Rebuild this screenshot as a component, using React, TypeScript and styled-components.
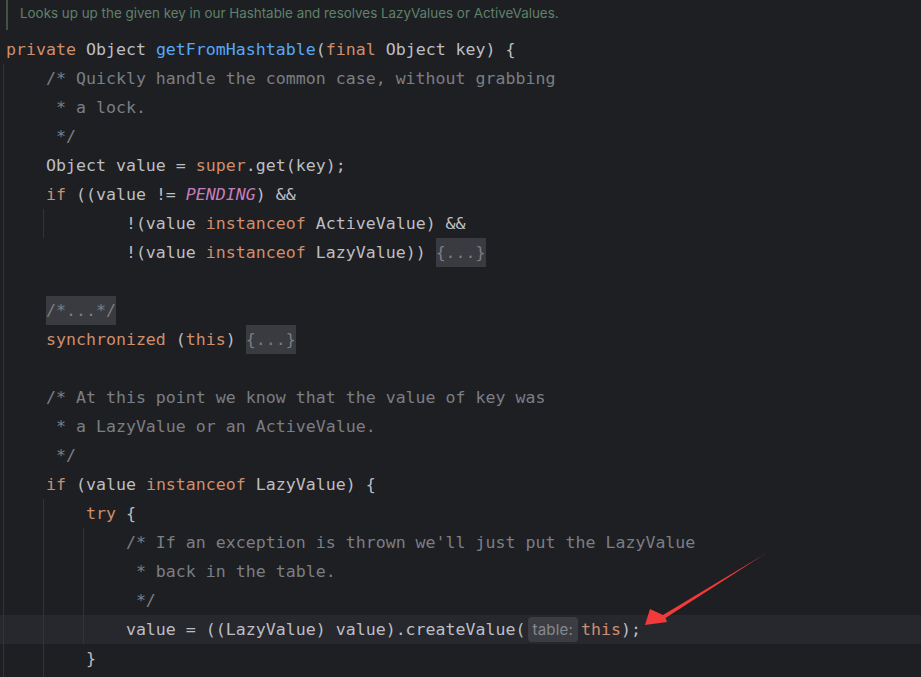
import React from 'react';
import styled, { createGlobalStyle, css } from 'styled-components';

const colors = {
  bg: '#1e1f22',
  text: '#bcbec4',
  keyword: '#cf8e6d',
  method: '#56a8f5',
  comment: '#7a7e85',
  constant: '#c77dbb',
  doc: '#5f826b',
  guide: '#313337',
  caretRow: '#26282e',
  fold: '#393b40',
  hint: '#3b3d42',
  hintText: '#868a91',
};

const rowHeight = 29;

const GlobalStyle = createGlobalStyle`
  html, body {
    margin: 0;
    padding: 0;
    background: ${colors.bg};
    overflow: hidden;
  }
`;

const Editor = styled.div`
  position: relative;
  width: 921px;
  height: 677px;
  background: ${colors.bg};
  overflow: hidden;
`;

const DocBlock = styled.div`
  display: flex;
  align-items: flex-start;
  height: 35px;
`;

const DocBar = styled.div`
  width: 2px;
  height: 30px;
  margin-left: 6px;
  background: #3e5546;
`;

const DocText = styled.div`
  margin-left: 12px;
  padding-top: 5px;
  font-family: Inter, "Noto Sans", sans-serif;
  font-size: 13.4px;
  line-height: 16px;
  color: ${colors.doc};
`;

const Code = styled.div`
  display: flex;
  flex-direction: column;
`;

const Line = styled.div<{ $current?: boolean }>`
  position: relative;
  height: ${rowHeight}px;
  line-height: ${rowHeight}px;
  padding-left: 6px;
  white-space: pre;
  font-family: "DejaVu Sans Mono", "Liberation Mono", monospace;
  font-size: 16.6px;
  color: ${colors.text};
  ${({ $current }) => $current && css`background: ${colors.caretRow};`}
`;

const Guide = styled.span<{ $x: number }>`
  position: absolute;
  top: 0;
  bottom: 0;
  left: ${({ $x }) => $x}px;
  width: 1px;
  background: ${colors.guide};
`;

type Kind = 'plain' | 'kw' | 'method' | 'comment' | 'const' | 'fold' | 'hint';

const Tok = styled.span<{ $kind: Kind }>`
  ${({ $kind }) => $kind === 'kw' && css`color: ${colors.keyword};`}
  ${({ $kind }) => $kind === 'method' && css`color: ${colors.method};`}
  ${({ $kind }) => $kind === 'comment' && css`color: ${colors.comment};`}
  ${({ $kind }) => $kind === 'const' && css`
    color: ${colors.constant};
    font-style: italic;
  `}
  ${({ $kind }) => $kind === 'fold' && css`
    display: inline-block;
    height: ${rowHeight}px;
    vertical-align: top;
    color: ${colors.comment};
    background: ${colors.fold};
  `}
`;

const Hint = styled.span`
  display: inline-block;
  height: 25px;
  line-height: 25px;
  margin: 2px 3px 0 2px;
  padding: 0 5px;
  vertical-align: top;
  border-radius: 4px;
  background: ${colors.hint};
  color: ${colors.hintText};
  font-family: Inter, "Noto Sans", sans-serif;
  font-size: 15px;
  letter-spacing: 0.2px;
`;

const Arrow = styled.svg`
  position: absolute;
  left: 0;
  top: 0;
  pointer-events: none;
`;

type Token = [Kind, string];
interface Row {
  tokens: Token[];
  guides?: number[];
  current?: boolean;
}

const sp = (n: number): Token => ['plain', ' '.repeat(n)];

const rows: Row[] = [
  {
    tokens: [
      ['kw', 'private '], ['plain', 'Object '], ['method', 'getFromHashtable'],
      ['plain', '('], ['kw', 'final '], ['plain', 'Object key) {'],
    ],
  },
  { tokens: [sp(4), ['comment', '/* Quickly handle the common case, without grabbing']], guides: [3] },
  { tokens: [sp(4), ['comment', ' * a lock.']], guides: [3] },
  { tokens: [sp(4), ['comment', ' */']], guides: [3] },
  { tokens: [sp(4), ['plain', 'Object value = '], ['kw', 'super'], ['plain', '.get(key);']], guides: [3] },
  {
    tokens: [sp(4), ['kw', 'if '], ['plain', '((value != '], ['const', 'PENDING'], ['plain', ') &&']],
    guides: [3],
  },
  {
    tokens: [sp(12), ['plain', '!(value '], ['kw', 'instanceof '], ['plain', 'ActiveValue) &&']],
    guides: [3, 43],
  },
  {
    tokens: [sp(12), ['plain', '!(value '], ['kw', 'instanceof '], ['plain', 'LazyValue)) '], ['fold', '{...}']],
    guides: [3],
  },
  { tokens: [], guides: [3] },
  { tokens: [sp(4), ['fold', '/*...*/']], guides: [3] },
  { tokens: [sp(4), ['kw', 'synchronized '], ['plain', '('], ['kw', 'this'], ['plain', ') '], ['fold', '{...}']], guides: [3] },
  { tokens: [], guides: [3] },
  { tokens: [sp(4), ['comment', '/* At this point we know that the value of key was']], guides: [3] },
  { tokens: [sp(4), ['comment', ' * a LazyValue or an ActiveValue.']], guides: [3] },
  { tokens: [sp(4), ['comment', ' */']], guides: [3] },
  { tokens: [sp(4), ['kw', 'if '], ['plain', '(value '], ['kw', 'instanceof '], ['plain', 'LazyValue) {']], guides: [3] },
  { tokens: [sp(8), ['kw', 'try '], ['plain', '{']], guides: [3, 43] },
  { tokens: [sp(12), ['comment', "/* If an exception is thrown we'll just put the LazyValue"]], guides: [3, 43, 83] },
  { tokens: [sp(12), ['comment', ' * back in the table.']], guides: [3, 43, 83] },
  { tokens: [sp(12), ['comment', ' */']], guides: [3, 43, 83] },
  {
    tokens: [
      sp(12), ['plain', 'value = ((LazyValue) value).createValue('], ['hint', 'table:'],
      ['kw', 'this'], ['plain', ');'],
    ],
    guides: [3, 43, 83],
    current: true,
  },
  { tokens: [sp(8), ['plain', '}']], guides: [3, 43] },
  { tokens: [], guides: [3, 43] },
];

const App: React.FC = () => {
  return (
    <Editor>
      <GlobalStyle />
      <DocBlock>
        <DocBar />
        <DocText>Looks up up the given key in our Hashtable and resolves LazyValues or ActiveValues.</DocText>
      </DocBlock>
      <Code>
        {rows.map((row, i) => (
          <Line key={i} $current={row.current}>
            {(row.guides || []).map((g) => <Guide key={g} $x={g} />)}
            {row.tokens.map(([kind, text], j) =>
              kind === 'hint'
                ? <Hint key={j}>{text}</Hint>
                : <Tok key={j} $kind={kind}>{text}</Tok>
            )}
            {row.tokens.length === 0 ? ' ' : null}
          </Line>
        ))}
      </Code>
      <Arrow width={921} height={677} viewBox="0 0 921 677">
        <polygon
          fill="#f23a3a"
          points="768,552 663,615 650,609 645,625 667,622 665.5,618"
        />
      </Arrow>
    </Editor>
  );
};

export default App;
